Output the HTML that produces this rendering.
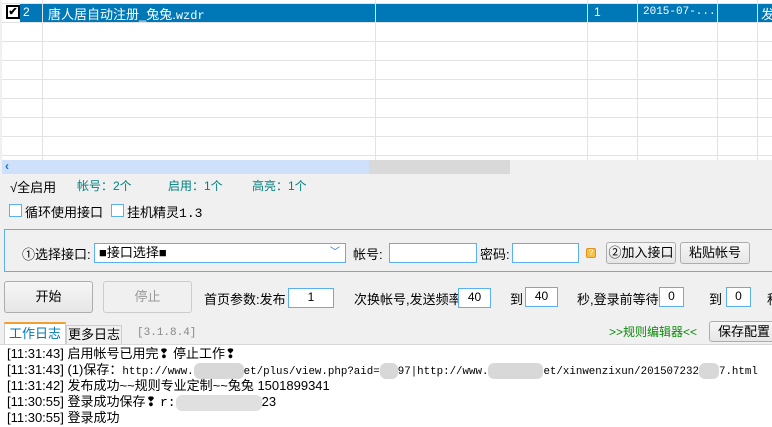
<!DOCTYPE html>
<html><head><meta charset="utf-8"><style>
*{margin:0;padding:0;box-sizing:border-box}
body{width:772px;height:427px;overflow:hidden;background:#f0f0f0;font-family:"Liberation Sans","Noto Sans CJK SC",sans-serif;font-size:12px;color:#000;position:relative}
.a{position:absolute;white-space:nowrap}
.hl{position:absolute;left:2px;width:770px;height:1px;background:#e3e3e3}
.vl{position:absolute;top:0;height:160px;width:1px;background:#e3e3e3}
.inp{position:absolute;background:#fff;border:1px solid #5ab0f0;text-align:center;font-size:12px;line-height:17px}
.btn{position:absolute;border:1px solid #adadad;border-radius:3px;background:linear-gradient(#f6f6f6,#e6e6e6);text-align:center;font-size:13px}
.mono{font-family:"Liberation Mono","Noto Sans CJK SC",monospace}
.b{display:inline-block;vertical-align:middle;height:16px;background:#d8d8d8;border-radius:6px}
.log div{height:16px;white-space:nowrap}
</style></head><body>
<div class="a" style="left:2px;top:0;width:770px;height:160px;background:#fff"></div>
<div class="a" style="left:20px;top:3px;width:752px;height:19px;background:#0078b8"></div>
<div class="hl" style="top:22px"></div><div class="hl" style="top:41px"></div><div class="hl" style="top:60px"></div><div class="hl" style="top:79px"></div><div class="hl" style="top:98px"></div><div class="hl" style="top:117px"></div><div class="hl" style="top:136px"></div><div class="hl" style="top:155px"></div><div class="hl" style="top:3px"></div>
<div class="vl" style="left:42px"></div><div class="vl" style="left:375px"></div><div class="vl" style="left:587px"></div><div class="vl" style="left:637px"></div><div class="vl" style="left:717px"></div><div class="vl" style="left:757px"></div>
<div class="a" style="left:6px;top:5px;width:14px;height:14px;border:2px solid #000;background:#fff;font-size:11px;line-height:10px;text-align:center;font-weight:bold">✔</div>
<div class="a" style="left:23px;top:5px;color:#fff;font-size:12px">2</div>
<div class="a" style="left:48px;top:4px;color:#fff;font-size:13px">唐人居自动注册_兔兔.<span class="mono" style="font-size:12px">wzdr</span></div>
<div class="a" style="left:594px;top:5px;color:#fff">1</div>
<div class="a mono" style="left:643px;top:6px;color:#fff;font-size:11px">2015-07-...</div>
<div class="a" style="left:761px;top:4px;color:#fff;font-size:13px">发</div>
<div class="a" style="left:2px;top:160px;width:367px;height:14px;background:#cfe0fb"></div>
<div class="a" style="left:369px;top:160px;width:141px;height:14px;background:#d9d9d9"></div>
<div class="a" style="left:5px;top:159px;color:#1a6fd6;font-size:12px;font-weight:bold">‹</div>
<div class="a" style="left:10px;top:177px;font-size:13px">√全启用</div>
<div class="a" style="left:77px;top:177px;color:#008080;font-size:12px">帐号：2个</div>
<div class="a" style="left:168px;top:177px;color:#008080;font-size:12px">启用：1个</div>
<div class="a" style="left:252px;top:177px;color:#008080;font-size:12px">高亮：1个</div>
<div class="a" style="left:9px;top:204px;width:13px;height:13px;border:1px solid #5ab0f0;background:#fff"></div>
<div class="a" style="left:25px;top:202px;font-size:13px">循环使用接口</div>
<div class="a" style="left:111px;top:204px;width:13px;height:13px;border:1px solid #5ab0f0;background:#fff"></div>
<div class="a" style="left:127px;top:202px;font-size:13px">挂机精灵<span class="mono">1.3</span></div>
<div class="a" style="left:4px;top:229px;width:780px;height:43px;border:1px solid #5ab0f0;border-right:none"></div>
<div class="a" style="left:22px;top:244px;font-size:13px">①选择接口:</div>
<div class="inp" style="left:94px;top:243px;width:252px;height:20px;text-align:left;padding-left:4px;font-size:13px">■接口选择■<span style="position:absolute;right:5px;top:0;color:#1a6fd6;font-size:10px">﹀</span></div>
<div class="a" style="left:353px;top:244px;font-size:13px">帐号:</div>
<div class="inp" style="left:389px;top:243px;width:88px;height:20px"></div>
<div class="a" style="left:480px;top:244px;font-size:13px">密码:</div>
<div class="inp" style="left:512px;top:243px;width:67px;height:20px"></div>
<div class="a" style="left:586px;top:248px;width:10px;height:10px;background:#f8c040;border:1px solid #e09020;border-radius:2px;font-size:8px;line-height:8px;text-align:center;color:#fff">?</div>
<div class="btn" style="left:606px;top:242px;width:70px;height:22px;line-height:20px">②加入接口</div>
<div class="btn" style="left:680px;top:242px;width:70px;height:22px;line-height:20px">粘贴帐号</div>
<div class="btn" style="left:4px;top:281px;width:89px;height:32px;line-height:30px">开始</div>
<div class="btn" style="left:103px;top:281px;width:89px;height:32px;line-height:30px;color:#999;background:#f0f0f0;border-color:#ccc">停止</div>
<div class="a" style="left:204px;top:289px;font-size:13px">首页参数:发布</div>
<div class="inp" style="left:288px;top:288px;width:46px;height:20px">1</div>
<div class="a" style="left:354px;top:289px;font-size:13px">次换帐号,发送频率</div>
<div class="inp" style="left:458px;top:288px;width:33px;height:20px">40</div>
<div class="a" style="left:510px;top:289px;font-size:13px">到</div>
<div class="inp" style="left:525px;top:287px;width:33px;height:20px">40</div>
<div class="a" style="left:577px;top:289px;font-size:13px">秒,登录前等待</div>
<div class="inp" style="left:659px;top:287px;width:25px;height:20px">0</div>
<div class="a" style="left:709px;top:289px;font-size:13px">到</div>
<div class="inp" style="left:726px;top:287px;width:25px;height:20px">0</div>
<div class="a" style="left:767px;top:289px;font-size:13px">秒</div>
<div class="a" style="left:4px;top:322px;width:62px;height:23px;background:#fff;border:1px solid #ccc;border-top:2px solid #f0a030;border-bottom:none;color:#0078b8;font-size:13px;text-align:center;line-height:20px">工作日志</div>
<div class="a" style="left:66px;top:325px;width:56px;height:20px;border:1px solid #ccc;border-bottom:none;font-size:13px;text-align:center;line-height:18px">更多日志</div>
<div class="a mono" style="left:137px;top:327px;color:#888;font-size:11px">[3.1.8.4]</div>
<div class="a" style="left:609px;top:323px;color:#0a8a0a;font-size:12px">&gt;&gt;规则编辑器&lt;&lt;</div>
<div class="btn" style="left:709px;top:321px;width:70px;height:21px;line-height:19px">保存配置</div>
<div class="a" style="left:0;top:344px;width:772px;height:83px;background:#fff;border-top:1px solid #d8d8d8"></div>
<div class="a log" style="left:7px;top:346px;font-size:13px;line-height:16px;width:765px;overflow:hidden">
<div>[11:31:43] 启用帐号已用完❢ 停止工作❢</div>
<div>[11:31:43] (1)保存：<span class="mono" style="font-size:10.8px">http://www.<span class="b" style="width:50px"></span>et/plus/view.php?aid=<span class="b" style="width:18px"></span>97|http://www.<span class="b" style="width:55px"></span>et/xinwenzixun/201507232<span class="b" style="width:20px"></span>7.html</span></div>
<div>[11:31:42] 发布成功~~规则专业定制~~兔兔 1501899341</div>
<div>[11:30:55] 登录成功保存❢  <span class="mono">r:</span><span class="b" style="width:86px;background:#e0e0e0"></span>23</div>
<div>[11:30:55] 登录成功</div>
</div>
</body></html>
